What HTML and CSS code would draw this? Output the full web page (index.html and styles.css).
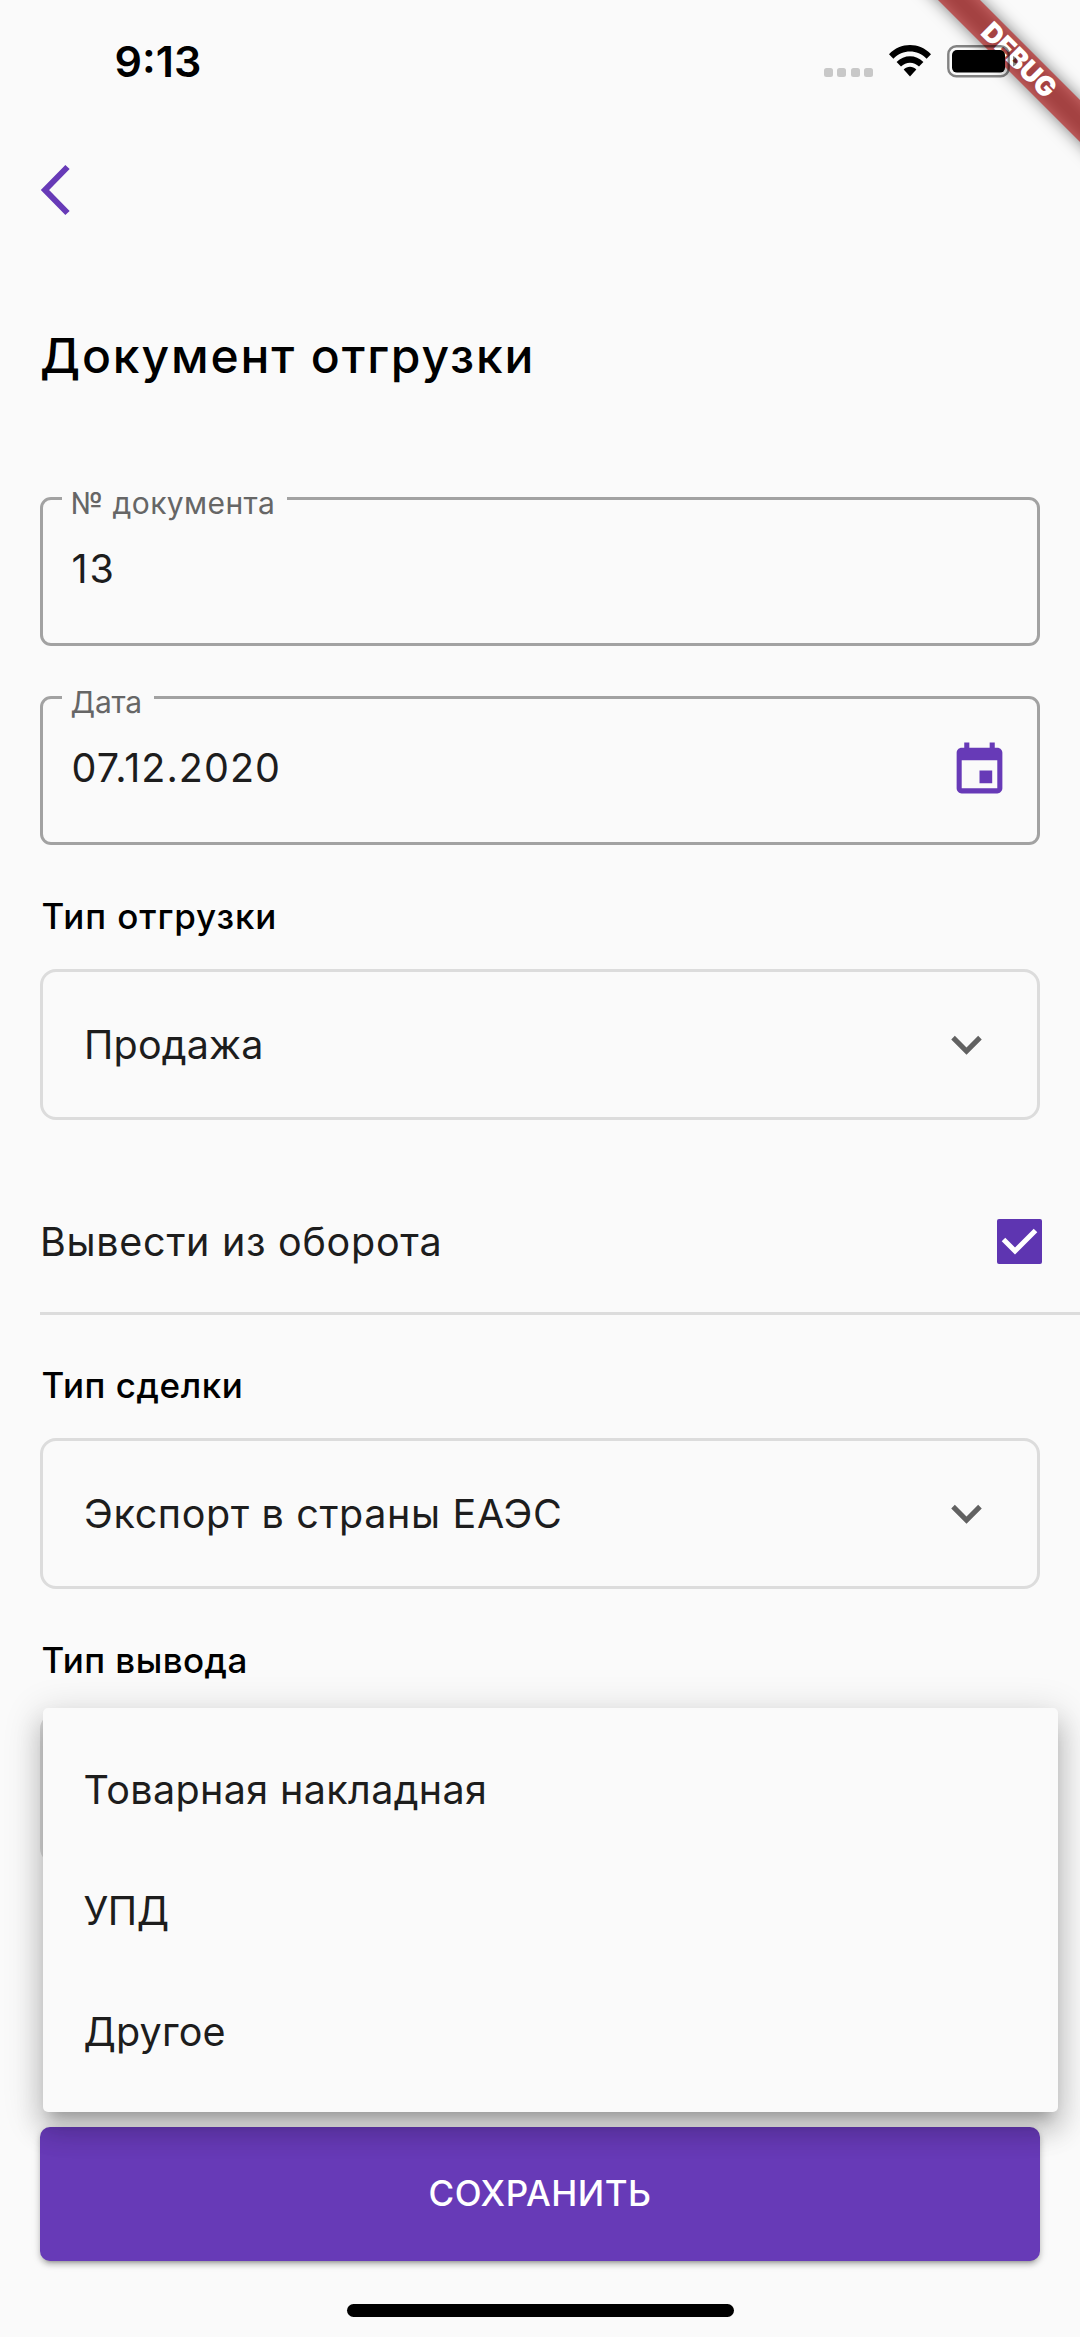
FILE: index.html
```
<!DOCTYPE html>
<html lang="ru">
<head>
<meta charset="utf-8">
<title>Документ отгрузки</title>
<link rel="stylesheet" href="styles.css">
</head>
<body>
<div class="screen">
  <header class="status">
    <time class="clock">9:13</time>
    <div class="indicators">
      <div class="dots"><i></i><i></i><i></i><i></i></div>
      <svg class="wifi" width="42" height="32" viewBox="0 0 42 32">
        <path d="M0 9.3C11.6-3 30.4-3 42 9.3l-4.4 4.5C28.400 4.200 13.600 4.200 4.400 13.800Z"/>
        <path d="M7.600 17.100C15.200 9.300 26.800 9.300 34.400 17.100L30 21.600C25 16.500 17 16.500 12 21.600Z"/>
        <path d="M14.700 24.400C18.300 20.800 23.700 20.800 27.300 24.400L21 31.400Z"/>
      </svg>
      <svg class="battery" width="70" height="33" viewBox="0 0 70 33">
        <rect x="1.300" y="1.300" width="60.400" height="30" rx="8" fill="none" stroke="#000" stroke-opacity=".48" stroke-width="2.400"/>
        <rect x="5" y="5" width="53" height="22.600" rx="5"/>
        <path d="M66 11c3.200 1 3.900 3 3.900 5.300S69.200 20.600 66 21.600Z" fill-opacity=".48"/>
      </svg>
    </div>
  </header>

  <nav class="nav">
    <svg width="32" height="52" viewBox="0 0 32 52"><path d="M27.500 3 5 26 27.500 49" fill="none" stroke="#673ab7" stroke-width="6"/></svg>
  </nav>

  <main class="form">
    <h1 class="title">Документ отгрузки</h1>

    <div class="field">
      <span class="field-label field-label-number">№ документа</span>
      <span class="field-value field-value-number">13</span>
    </div>
    <div class="field">
      <span class="field-label field-label-date">Дата</span>
      <span class="field-value">07.12.2020</span>
      <svg class="calendar" width="61" height="61" viewBox="0 0 24 24"><path fill="#673ab7" d="M17 12h-5v5h5v-5zM16 1v2H8V1H6v2H5c-1.110 0-1.990.9-1.990 2L3 19c0 1.100.89 2 2 2h14c1.100 0 2-.9 2-2V5c0-1.100-.9-2-2-2h-1V1h-2zm3 18H5V8h14v11z"/></svg>
    </div>

    <h2 class="group shipment">Тип отгрузки</h2>
    <div class="select">
      <span class="select-value">Продажа</span>
      <svg width="61" height="61" viewBox="0 0 24 24"><path fill="#616161" d="M16.590 8.590 12 13.170 7.410 8.590 6 10l6 6 6-6z"/></svg>
    </div>

    <div class="toggle">
      <span class="toggle-text">Вывести из оборота</span>
      <svg class="checkbox" width="45" height="45" viewBox="0 0 45 45"><rect width="45" height="45" rx="2" fill="#5e35b1"/><path d="M6.500 20.500 18 32 38.500 11.500" fill="none" stroke="#fff" stroke-width="5"/></svg>
    </div>

    <h2 class="group deal">Тип сделки</h2>
    <div class="select">
      <span class="select-value select-value-deal">Экспорт в страны ЕАЭС</span>
      <svg width="61" height="61" viewBox="0 0 24 24"><path fill="#616161" d="M16.590 8.590 12 13.170 7.410 8.590 6 10l6 6 6-6z"/></svg>
    </div>

    <h2 class="group output">Тип вывода</h2>
    <div class="select"></div>
  </main>

  <button class="save" type="button">СОХРАНИТЬ</button>
  <div class="home"></div>

  <ul class="menu">
    <li class="menu-item">Товарная накладная</li>
    <li class="menu-item menu-item-short">УПД</li>
    <li class="menu-item menu-item-other">Другое</li>
  </ul>

  <svg class="ribbon" width="180" height="180" viewBox="0 0 180 180">
    <defs><filter id="soft" x="-20%" y="-20%" width="140%" height="140%"><feGaussianBlur stdDeviation="8"/></filter></defs>
    <path d="M18-20H60L200 120V162Z" fill="#000" fill-opacity=".5" filter="url(#soft)"/>
    <path d="M18-20H60L200 120V162Z" fill="#b71c1c" fill-opacity=".63"/>
    <text class="ribbon-text" transform="translate(119 60) rotate(45)" text-anchor="middle" y="9.500">DEBUG</text>
  </svg>
</div>
</body>
</html>
```
FILE: styles.css
```
* { box-sizing: border-box; }

body {
  margin: 0;
  background: #fafafa;
  font-family: "Inter", "Noto Sans", sans-serif;
  color: #1d1d1d;
}

.screen {
  position: relative;
  width: 1080px;
  height: 2337px;
  overflow: hidden;
  display: flex;
  flex-direction: column;
}

svg { display: block; flex: none; }

/* Status bar */
.status {
  height: 122px;
  padding: 0 63px 0 114.5px;
  display: flex;
  align-items: center;
  justify-content: space-between;
}
.clock {
  font-size: 43px;
  line-height: 50px;
  font-weight: 600;
  color: #000;
}
.indicators {
  position: relative;
  z-index: 4;
  display: flex;
  align-items: center;
}
.dots {
  display: flex;
  gap: 4.500px;
  margin: 23px 16px 0 0;
}
.dots i {
  width: 9px;
  height: 9px;
  border-radius: 2.500px;
  background: #c8c8c8;
}
.wifi { margin-right: 16px; }

.nav { padding: 42px 0 0 40px; }

/* Form */
.form {
  padding: 110px 0 0 40px;
  display: flex;
  flex-direction: column;
}
.title {
  margin: 0 0 111px;
  font-size: 48px;
  line-height: 60px;
  font-weight: 500;
  letter-spacing: 1.860px;
  color: #000;
}
.field {
  position: relative;
  width: 1000px;
  height: 149px;
  margin-bottom: 50px;
  padding: 0 27.500px 0 28.500px;
  border: 3px solid #a2a2a2;
  border-radius: 11px;
  display: flex;
  align-items: center;
  justify-content: space-between;
}
.field-label {
  position: absolute;
  top: -15px;
  left: 19px;
  padding-left: 8.500px;
  background: #fafafa;
  font-size: 30px;
  line-height: 36px;
  color: #666;
  white-space: nowrap;
}
.field-label-number { width: 225px; letter-spacing: .4px; }
.field-label-date { width: 92px; letter-spacing: -.2px; }
.field-value {
  margin-bottom: 6px;
  font-size: 39.500px;
  line-height: 48px;
  letter-spacing: 1.040px;
}
.field-value-number { letter-spacing: 2px; }

.group {
  margin: 0 0 32px 1.500px;
  font-size: 35px;
  line-height: 42px;
  font-weight: 500;
  color: #000;
}
.shipment { letter-spacing: .9px; }
.deal { margin-top: 49px; letter-spacing: .55px; }
.output { margin-top: 50px; letter-spacing: .43px; }

.select {
  width: 1000px;
  height: 151px;
  padding: 0 40px 0 41px;
  border: 3px solid #dcdcdc;
  border-radius: 16px;
  display: flex;
  align-items: center;
  justify-content: space-between;
}
.select-value {
  font-size: 39.500px;
  line-height: 48px;
  letter-spacing: .17px;
}
.select-value-deal { letter-spacing: .63px; }

.toggle {
  height: 144px;
  margin-top: 51px;
  padding-right: 38px;
  border-bottom: 3px solid #dcdcdc;
  display: flex;
  align-items: center;
  justify-content: space-between;
}
.toggle-text {
  font-size: 39.500px;
  line-height: 48px;
  letter-spacing: .71px;
}

.save {
  width: 1000px;
  height: 134px;
  margin: 263px 0 0 40px;
  padding: 0 0 2px;
  border: 0;
  border-radius: 10px;
  background: #673ab7;
  color: #fff;
  font: 500 35px/42px "Inter", "Noto Sans", sans-serif;
  letter-spacing: .49px;
  box-shadow: 0 6px 3px -5px rgba(0, 0, 0, .2), 0 4px 5px rgba(0, 0, 0, .16), 0 2px 10px rgba(0, 0, 0, .14);
}
.home {
  width: 387px;
  height: 13px;
  margin: 43px 0 0 347px;
  border-radius: 7px;
  background: #000;
}

/* Open dropdown menu, over the form */
.menu {
  position: absolute;
  z-index: 2;
  top: 1708px;
  left: 43px;
  width: 1014.500px;
  height: 404px;
  margin: 0;
  padding: 22px 0 20px;
  list-style: none;
  background: #fafafa;
  border-radius: 5px;
  box-shadow: 0 13px 13px -8px rgba(0, 0, 0, .2), 0 18px 26px 3px rgba(0, 0, 0, .14), 0 8px 37px 5px rgba(0, 0, 0, .14);
  display: grid;
  grid-template-rows: repeat(3, 1fr);
}
.menu-item {
  padding-left: 40.500px;
  display: flex;
  align-items: center;
  font-size: 39.500px;
  line-height: 48px;
  letter-spacing: .36px;
}
.menu-item-short { letter-spacing: -.5px; }
.menu-item-other { letter-spacing: .15px; }

/* Corner ribbon */
.ribbon {
  position: absolute;
  z-index: 3;
  top: 0;
  right: 0;
}
.ribbon-text {
  font-size: 27px;
  font-weight: 900;
  letter-spacing: -.2px;
  fill: #fff;
}
```
